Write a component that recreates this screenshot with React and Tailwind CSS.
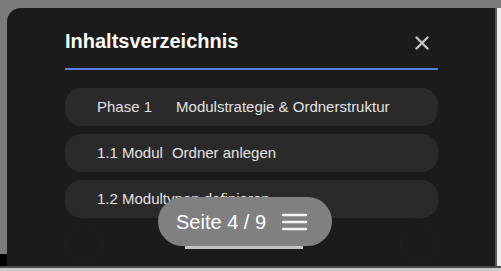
import { useState } from "react";

const entries = [
  { label: "Phase 1", title: "Modulstrategie & Ordnerstruktur", gap: "ml-[24px]" },
  { label: "1.1 Modul", title: "Ordner anlegen", gap: "ml-[9px]" },
  { label: "1.2 Modultypen definieren", title: "", gap: "" },
];

function CloseIcon() {
  return (
    <svg width="14" height="14" viewBox="0 0 14 14" fill="none">
      <path d="M1.5 1.5L12.5 12.5M12.5 1.5L1.5 12.5" stroke="#c4c4c4" strokeWidth="2.4" strokeLinecap="round" />
    </svg>
  );
}

function MenuIcon() {
  return (
    <svg width="25" height="18" viewBox="0 0 25 18" fill="none">
      <path d="M1 2h23M1 9h23M1 16h23" stroke="#f2f2f2" strokeWidth="2.4" strokeLinecap="round" />
    </svg>
  );
}

export default function App() {
  const [page] = useState({ current: 4, total: 9 });

  return (
    <div className="w-[501px] h-[271px] bg-[#7b7b7b] flex flex-col overflow-hidden font-['Liberation_Sans',Arial,sans-serif]">
      <div className="h-[8px] shrink-0" />
      <div className="flex h-[258px] shrink-0">
        <div className="w-[7px] flex flex-col">
          <div className="flex-1" />
          <div className="h-[12px] bg-black" />
        </div>

        {/* Modal panel */}
        <div className="w-[488px] bg-[#1b1b1b] rounded-tl-[14px] relative pl-[58px] pr-[57px] pt-[21px]">
          <div className="flex items-center justify-between h-[24px] pr-[9px]">
            <h2 className="text-[20px] leading-[24px] font-bold text-white">Inhaltsverzeichnis</h2>
            <button className="w-[14px] h-[14px] flex items-center justify-center mt-[4px]">
              <CloseIcon />
            </button>
          </div>
          <div className="mt-[15px] h-[2px] bg-[#5b7fdf]" />

          <div className="mt-[18px] flex flex-col gap-[8px]">
            {entries.map((e) => (
              <div
                key={e.label}
                className="h-[38px] rounded-[16px] bg-[#2a2a2a] flex items-center pl-[32px] text-[15px] text-[#e2e2e2] whitespace-nowrap"
              >
                <span>{e.label}</span>
                {e.title && <span className={e.gap}>{e.title}</span>}
              </div>
            ))}
          </div>

          <div className="mt-[5px] flex justify-between">
            <div className="w-[38px] h-[38px] rounded-full border border-[#1f1f1f]" />
            <div className="w-[38px] h-[38px] rounded-full border border-[#1f1f1f]" />
          </div>

          {/* Page indicator */}
          <div className="absolute left-[178px] top-[238px] w-[118px] h-[3px] bg-[#c2c2c2]" />
          <div className="absolute left-[151px] top-[189px] w-[174px] h-[49px] rounded-full bg-[#808080] flex items-center pl-[18px]">
            <span className="text-[20px] leading-[24px] text-white">
              Seite {page.current} / {page.total}
            </span>
            <span className="ml-[16px] flex items-center">
              <MenuIcon />
            </span>
          </div>
        </div>

        <div className="w-[2px] bg-[#5a5a5a]" />
        <div className="flex-1 bg-[#ededed]" />
      </div>
      <div className="h-[2px] shrink-0 bg-[#4a4a4a]" />
      <div className="flex-1 bg-[#cacaca]" />
    </div>
  );
}
